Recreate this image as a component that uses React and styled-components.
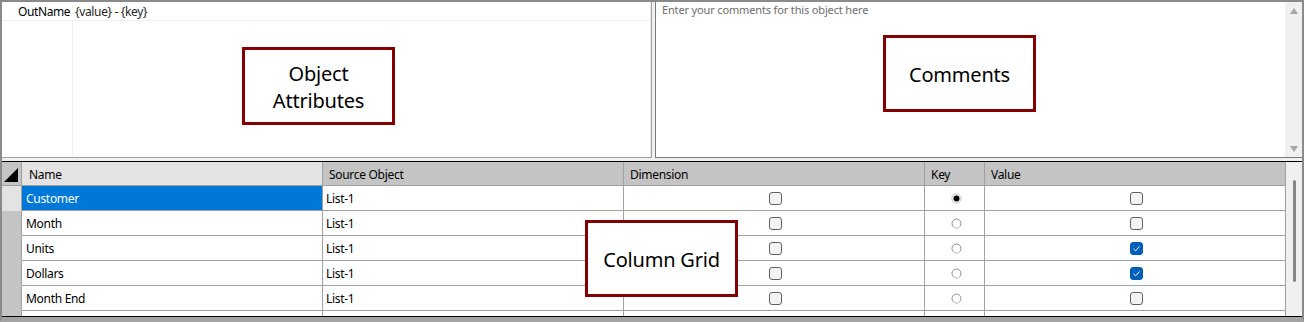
import React from "react";
import styled, { createGlobalStyle } from "styled-components";

const FONT = `"Segoe UI", "Noto Sans", "DejaVu Sans", sans-serif`;

const Global = createGlobalStyle`
  html, body { margin: 0; padding: 0; background: #ffffff; }
  * { box-sizing: border-box; }
`;

const Frame = styled.div`
  position: relative;
  width: 1304px;
  height: 322px;
  border: 2px solid #8a8a8a;
  border-bottom: 5px solid #a3a3a3;
  background: #f0f0f0;
  display: flex;
  flex-direction: column;
  font-family: ${FONT};
  color: #000;
  overflow: hidden;
`;

const TopSplit = styled.div`
  display: flex;
  height: 156px;
  flex: none;
`;

const AttrPanel = styled.div`
  width: 650px;
  background: #fff;
  border-right: 1px solid #a0a0a0;
  border-bottom: 1px solid #a0a0a0;
  display: grid;
  grid-template-columns: 71px 1fr;
  grid-template-rows: 19px 1fr;
`;

const PropLabel = styled.div`
  font-size: 12px;
  letter-spacing: -0.4px;
  line-height: 18px;
  padding: 1px 0 0 16px;
  border-bottom: 1px solid #f0f0f0;
  white-space: nowrap;
`;

const PropValue = styled.div`
  font-size: 12px;
  letter-spacing: -0.35px;
  line-height: 18px;
  padding: 1px 0 0 2px;
  color: #262626;
  border-bottom: 1px solid #f0f0f0;
  border-right: 1px solid #ececec;
  white-space: nowrap;
`;

const PropLabelFill = styled.div`
  border-right: 1px solid #f0f0f0;
`;

const PropValueFill = styled.div`
  border-right: 1px solid #ececec;
`;

const VSplitter = styled.div`
  width: 3px;
  background: #f0f0f0;
`;

const CommentsPanel = styled.div`
  flex: 1;
  display: flex;
  background: #fff;
  border-left: 1px solid #7a7a7a;
  border-bottom: 1px solid #7a7a7a;
`;

const CommentText = styled.div`
  flex: 1;
  padding: 0 6px;
  font-size: 11px;
  letter-spacing: -0.15px;
  line-height: 16px;
  color: #6d6d6d;
`;

const TextScroll = styled.div`
  width: 17px;
  background: #f0f0f0;
  display: flex;
  flex-direction: column;
  justify-content: space-between;
  align-items: center;
  padding: 6px 0 5px;
`;

const Arrow = styled.div`
  width: 0;
  height: 0;
  border-left: 4px solid transparent;
  border-right: 4px solid transparent;
  ${(p) =>
    p.$down
      ? "border-top: 6px solid #a6a6a6;"
      : "border-bottom: 6px solid #a6a6a6;"}
`;

const HSplitter = styled.div`
  height: 3px;
  flex: none;
  background: #f0f0f0;
`;

const Grid = styled.div`
  height: 156px;
  flex: none;
  display: flex;
  background: #fff;
  border-top: 1px solid #000;
  border-bottom: 1px solid #000;
`;

const GridMain = styled.div`
  width: 1284px;
  display: flex;
  flex-direction: column;
  overflow: hidden;
`;

const COLS = "20px 301px 301px 301px 60px 301px";

const HeaderRow = styled.div`
  display: grid;
  grid-template-columns: ${COLS};
  height: 24px;
  flex: none;
`;

const HeadCell = styled.div`
  background: ${(p) => (p.$active ? "#e3e3e3" : "#c4c4c4")};
  border-right: 1px solid #a0a0a0;
  border-bottom: 1px solid #a0a0a0;
  font-size: 12px;
  letter-spacing: -0.3px;
  line-height: 20px;
  padding-top: 3px;
  padding-left: ${(p) => p.$pad || 6}px;
  white-space: nowrap;
  color: #000;
  overflow: hidden;
`;

const Corner = styled.div`
  background: #c4c4c4;
  border-right: 1px solid #a0a0a0;
  border-bottom: 1px solid #a0a0a0;
  display: flex;
  align-items: flex-end;
  justify-content: flex-start;
  padding: 0 0 3px 2px;
`;

const Body = styled.div`
  flex: 1;
  overflow: hidden;
`;

const Row = styled.div`
  display: grid;
  grid-template-columns: ${COLS};
  height: 25px;
`;

const RowHead = styled.div`
  background: ${(p) => (p.$active ? "#e3e3e3" : "#c4c4c4")};
  border-right: 1px solid #a0a0a0;
  border-bottom: 1px solid ${(p) => (p.$active ? "#e3e3e3" : "#c4c4c4")};
`;

const Cell = styled.div`
  border-right: 1px solid #a0a0a0;
  border-bottom: 1px solid #a0a0a0;
  background: ${(p) => (p.$selected ? "#0078d7" : "#fff")};
  color: ${(p) => (p.$selected ? "#fff" : "#000")};
  font-size: 12px;
  letter-spacing: -0.3px;
  line-height: 20px;
  padding-top: ${(p) => (p.$center ? 0 : 3)}px;
  padding-left: ${(p) => p.$pad || 3}px;
  white-space: nowrap;
  overflow: hidden;
  display: ${(p) => (p.$center ? "flex" : "block")};
  align-items: center;
  justify-content: center;
`;

const Check = styled.div`
  width: 13px;
  height: 13px;
  border-radius: 3px;
  border: 1px solid ${(p) => (p.$checked ? "#005fb8" : "#616161")};
  background: ${(p) => (p.$checked ? "#005fb8" : "#f3f3f3")};
  display: flex;
  align-items: center;
  justify-content: center;
`;

const GridScroll = styled.div`
  width: 16px;
  background: #f0f0f0;
  display: flex;
  justify-content: center;
  padding: 18px 0 0 1px;
`;

const Thumb = styled.div`
  width: 3px;
  height: 102px;
  border-radius: 2px;
  background: #858585;
`;

const Callout = styled.div`
  position: absolute;
  left: ${(p) => p.$x - 2}px;
  top: ${(p) => p.$y - 2}px;
  width: ${(p) => p.$w}px;
  height: ${(p) => p.$h}px;
  border: 3px solid #850000;
  background: #fff;
  display: flex;
  align-items: center;
  justify-content: center;
  text-align: center;
  font-size: 20px;
  letter-spacing: -0.2px;
  line-height: 27px;
  padding-top: 2px;
  color: #000;
`;

function CheckBox({ checked }) {
  return (
    <Check $checked={checked}>
      {checked && (
        <svg width="9" height="9" viewBox="0 0 9 9">
          <path d="M1.5 4.8 L3.6 6.8 L7.6 2.4" fill="none" stroke="#fff" strokeWidth="1" />
        </svg>
      )}
    </Check>
  );
}

function Radio({ checked }) {
  return (
    <svg width="11" height="11" viewBox="0 0 11 11">
      {checked ? (
        <>
          <circle cx="5.5" cy="5.5" r="4.7" fill="#f2f2f2" stroke="#c8c8c8" strokeWidth="1" />
          <circle cx="5.5" cy="5.5" r="3" fill="#000" />
        </>
      ) : (
        <>
          <circle cx="5.5" cy="5.5" r="4.5" fill="#fff" stroke="#8e8e8e" strokeWidth="1" />
          <path d="M2.3 8.7 A4.5 4.5 0 0 0 8.7 8.7" fill="none" stroke="#dedede" strokeWidth="1.3" />
        </>
      )}
    </svg>
  );
}

const rows = [
  { name: "Customer", src: "List-1", dim: false, key: true, val: false },
  { name: "Month", src: "List-1", dim: false, key: false, val: false },
  { name: "Units", src: "List-1", dim: false, key: false, val: true },
  { name: "Dollars", src: "List-1", dim: false, key: false, val: true },
  { name: "Month End", src: "List-1", dim: false, key: false, val: false },
  { name: "", src: "", dim: null, key: null, val: null },
];

export default function App() {
  return (
    <>
      <Global />
      <Frame>
        <TopSplit>
          <AttrPanel>
            <PropLabel>OutName</PropLabel>
            <PropValue>{"{value} - {key}"}</PropValue>
            <PropLabelFill />
            <PropValueFill />
          </AttrPanel>
          <VSplitter />
          <CommentsPanel>
            <CommentText>Enter your comments for this object here</CommentText>
            <TextScroll>
              <Arrow />
              <Arrow $down />
            </TextScroll>
          </CommentsPanel>
        </TopSplit>
        <HSplitter />
        <Grid>
          <GridMain>
            <HeaderRow>
              <Corner>
                <svg width="14" height="14" viewBox="0 0 14 14">
                  <polygon points="0,14 14,14 14,0" fill="#000" />
                </svg>
              </Corner>
              <HeadCell $active $pad={7}>Name</HeadCell>
              <HeadCell>Source Object</HeadCell>
              <HeadCell>Dimension</HeadCell>
              <HeadCell>Key</HeadCell>
              <HeadCell>Value</HeadCell>
            </HeaderRow>
            <Body>
              {rows.map((r, i) => (
                <Row key={i}>
                  <RowHead $active={i === 0} />
                  <Cell $selected={i === 0} $pad={4}>{r.name}</Cell>
                  <Cell>{r.src}</Cell>
                  <Cell $center>{r.dim !== null && <CheckBox checked={r.dim} />}</Cell>
                  <Cell $center>{r.key !== null && <Radio checked={r.key} />}</Cell>
                  <Cell $center>{r.val !== null && <CheckBox checked={r.val} />}</Cell>
                </Row>
              ))}
            </Body>
          </GridMain>
          <GridScroll>
            <Thumb />
          </GridScroll>
        </Grid>
        <Callout $x={242} $y={47} $w={153} $h={78}>
          Object
          <br />
          Attributes
        </Callout>
        <Callout $x={883} $y={35} $w={153} $h={77}>Comments</Callout>
        <Callout $x={585} $y={220} $w={153} $h={77}>Column Grid</Callout>
      </Frame>
    </>
  );
}
